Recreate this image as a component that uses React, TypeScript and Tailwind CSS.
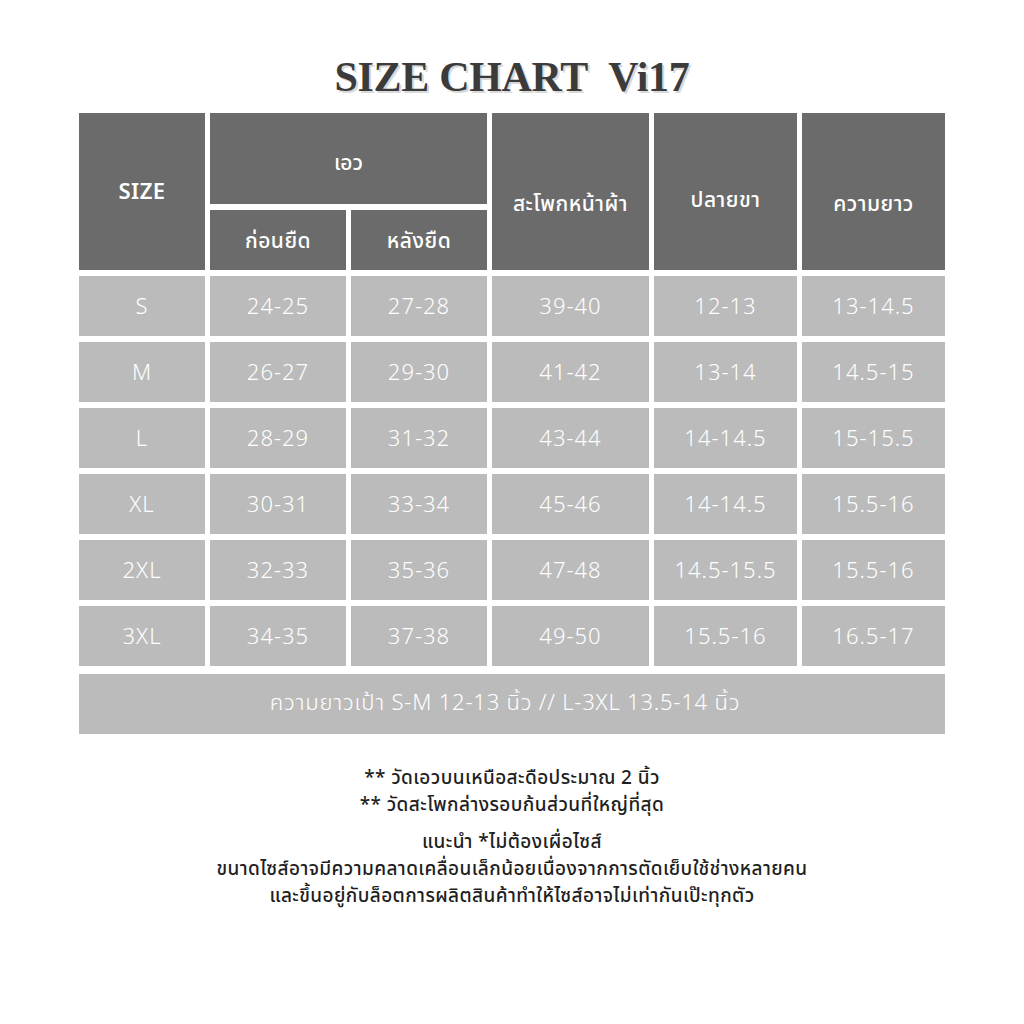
import React from "react";

const rows: string[][] = [
  ["S", "24-25", "27-28", "39-40", "12-13", "13-14.5"],
  ["M", "26-27", "29-30", "41-42", "13-14", "14.5-15"],
  ["L", "28-29", "31-32", "43-44", "14-14.5", "15-15.5"],
  ["XL", "30-31", "33-34", "45-46", "14-14.5", "15.5-16"],
  ["2XL", "32-33", "35-36", "47-48", "14.5-15.5", "15.5-16"],
  ["3XL", "34-35", "37-38", "49-50", "15.5-16", "16.5-17"],
];

const thai = { fontFamily: '"Noto Sans Thai", "Noto Sans", "Open Sans", sans-serif' };

export default function App() {
  return (
    <div className="w-[1024px] h-[1024px] bg-white flex flex-col items-center" style={thai}>
      <h1
        className="mt-[53px] text-[42px] leading-[48px] font-bold text-[#3b3b3b] tracking-[-0.3px] [text-shadow:2px_2px_0_#d9d9d9]"
        style={{ fontFamily: '"Liberation Serif", "DejaVu Serif", serif' }}
      >
        SIZE CHART&nbsp;&nbsp;Vi17
      </h1>
      <div className="mt-[12px] grid grid-cols-[126px_136px_136px_157px_143px_143px] grid-rows-[91px_60px_60px_60px_60px_60px_60px_60px_62px] gap-x-[5px] gap-y-[6px] text-white">
        <div className="row-span-2 bg-[#6b6b6b] flex items-center justify-center text-[22px] font-semibold tracking-[0.5px] pt-[2px]">SIZE</div>
        <div className="col-span-2 bg-[#6b6b6b] flex items-center justify-center text-[21px] font-medium pt-[10px]">เอว</div>
        <div className="row-span-2 bg-[#6b6b6b] flex items-center justify-center text-[21px] font-medium tracking-[0.5px] pt-[26px]">สะโพกหน้าผ้า</div>
        <div className="row-span-2 bg-[#6b6b6b] flex items-center justify-center text-[21px] font-medium tracking-[0.5px] pt-[18px]">ปลายขา</div>
        <div className="row-span-2 bg-[#6b6b6b] flex items-center justify-center text-[21px] font-medium tracking-[0.5px] pt-[26px]">ความยาว</div>
        <div className="bg-[#6b6b6b] flex items-center justify-center text-[21px] font-medium tracking-[0.5px] pt-[4px]">ก่อนยืด</div>
        <div className="bg-[#6b6b6b] flex items-center justify-center text-[21px] font-medium tracking-[0.5px] pt-[4px]">หลังยืด</div>
        {rows.map((r) =>
          r.map((c, i) => (
            <div key={r[0] + i} className="bg-[#bbbbbb] flex items-center justify-center text-[22px] font-light tracking-[1px] pt-[3px]">
              {c}
            </div>
          ))
        )}
        <div className="col-span-6 bg-[#bbbbbb] flex items-center justify-center text-[22px] font-light tracking-[0.8px] mt-[2px] pb-[2px] pr-[14px]">
          ความยาวเป้า S-M 12-13 นิ้ว // L-3XL 13.5-14 นิ้ว
        </div>
      </div>
      <div className="mt-[31px] flex flex-col items-center text-[#1f1f1f] text-[19px] font-medium tracking-[0.4px] leading-[27px]">
        <p>** วัดเอวบนเหนือสะดือประมาณ 2 นิ้ว</p>
        <p>** วัดสะโพกล่างรอบก้นส่วนที่ใหญ่ที่สุด</p>
        <p className="mt-[10px]">แนะนำ *ไม่ต้องเผื่อไซส์</p>
        <p>ขนาดไซส์อาจมีความคลาดเคลื่อนเล็กน้อยเนื่องจากการตัดเย็บใช้ช่างหลายคน</p>
        <p>และขึ้นอยู่กับล็อตการผลิตสินค้าทำให้ไซส์อาจไม่เท่ากันเป๊ะทุกตัว</p>
      </div>
    </div>
  );
}
